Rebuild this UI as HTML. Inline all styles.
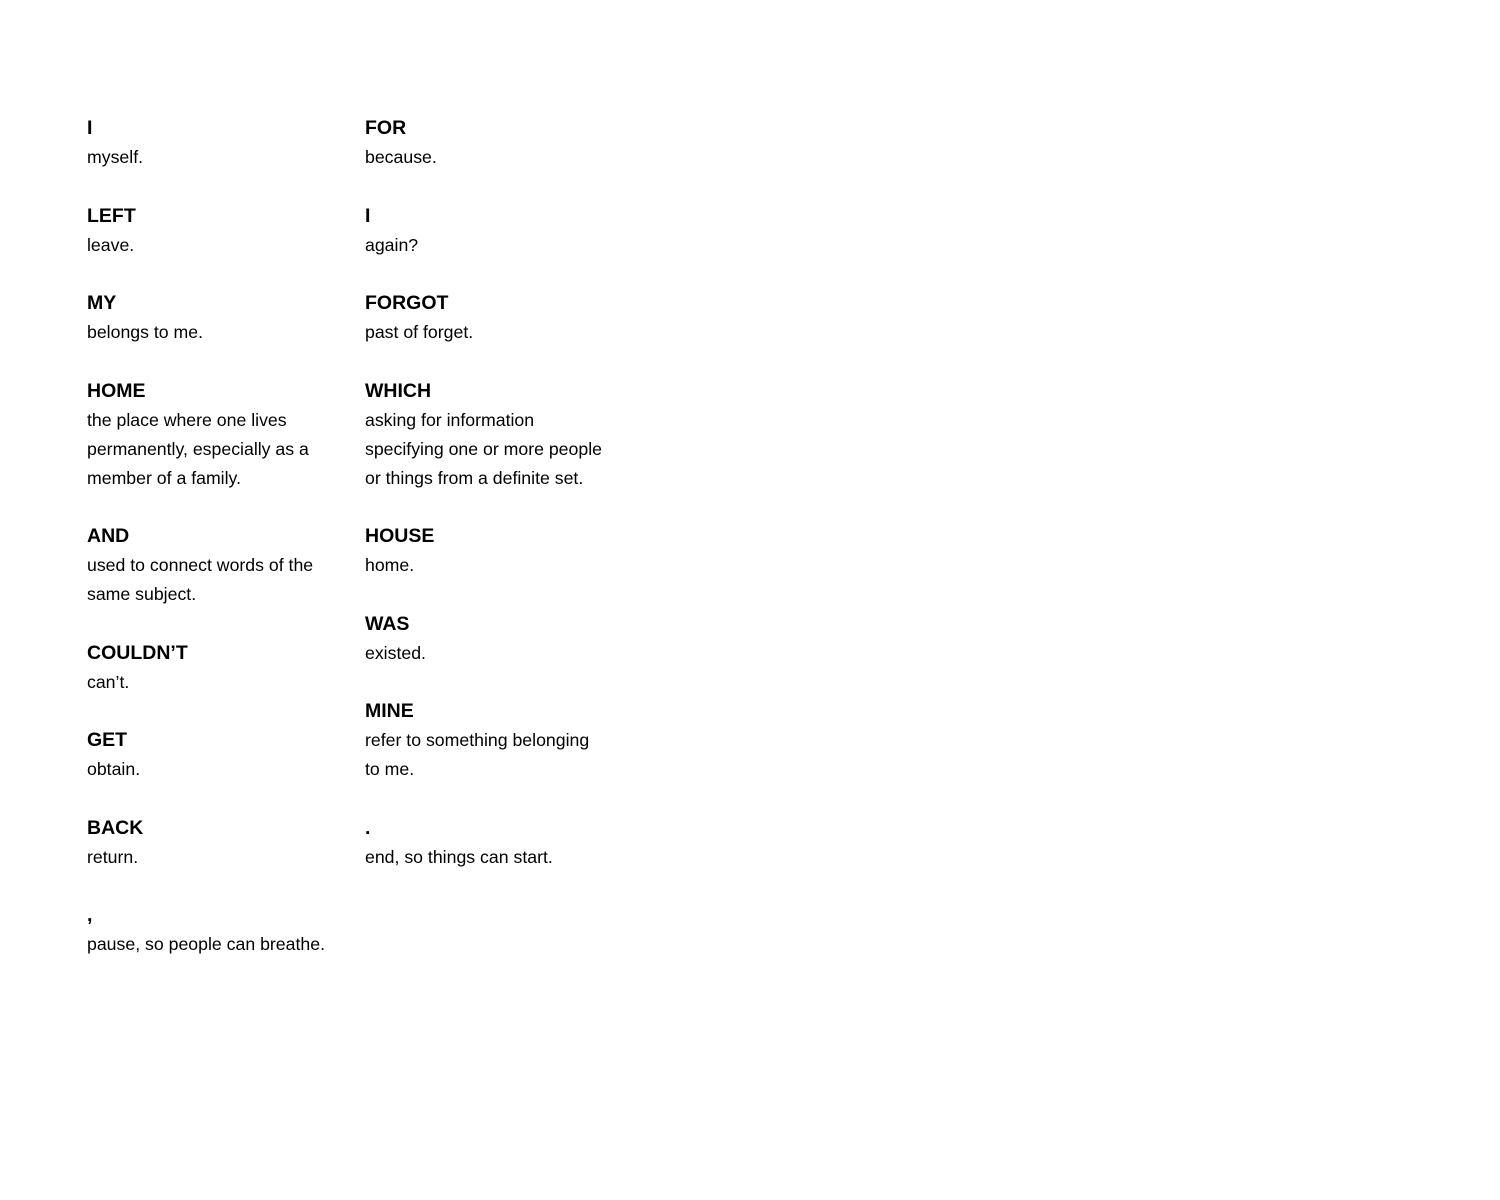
<!DOCTYPE html>
<html><head><meta charset="utf-8"><style>
html,body{margin:0;padding:0;background:#fff;width:1500px;height:1200px;overflow:hidden}
body{font-family:"Liberation Sans",sans-serif;color:#000}
.col{position:absolute;top:113px;width:250px}
.e{margin-bottom:28.5px}
.h{font-weight:bold;font-size:19.5px;line-height:30px;height:30px}
.d{font-size:17.7px;line-height:29px}
</style></head><body>
<div class="col" style="left:87px">
<div class="e"><div class="h">I</div><div class="d">myself.</div></div>
<div class="e"><div class="h">LEFT</div><div class="d">leave.</div></div>
<div class="e"><div class="h">MY</div><div class="d">belongs to me.</div></div>
<div class="e"><div class="h">HOME</div><div class="d">the place where one lives<br>permanently, especially as a<br>member of a family.</div></div>
<div class="e"><div class="h">AND</div><div class="d">used to connect words of the<br>same subject.</div></div>
<div class="e"><div class="h">COULDN’T</div><div class="d">can’t.</div></div>
<div class="e"><div class="h">GET</div><div class="d">obtain.</div></div>
<div class="e"><div class="h">BACK</div><div class="d">return.</div></div>
<div class="e"><div class="h">,</div><div class="d">pause, so people can breathe.</div></div>
</div>
<div class="col" style="left:365px">
<div class="e"><div class="h">FOR</div><div class="d">because.</div></div>
<div class="e"><div class="h">I</div><div class="d">again?</div></div>
<div class="e"><div class="h">FORGOT</div><div class="d">past of forget.</div></div>
<div class="e"><div class="h">WHICH</div><div class="d">asking for information<br>specifying one or more people<br>or things from a definite set.</div></div>
<div class="e"><div class="h">HOUSE</div><div class="d">home.</div></div>
<div class="e"><div class="h">WAS</div><div class="d">existed.</div></div>
<div class="e"><div class="h">MINE</div><div class="d">refer to something belonging<br>to me.</div></div>
<div class="e"><div class="h">.</div><div class="d">end, so things can start.</div></div>
</div>
</body></html>
